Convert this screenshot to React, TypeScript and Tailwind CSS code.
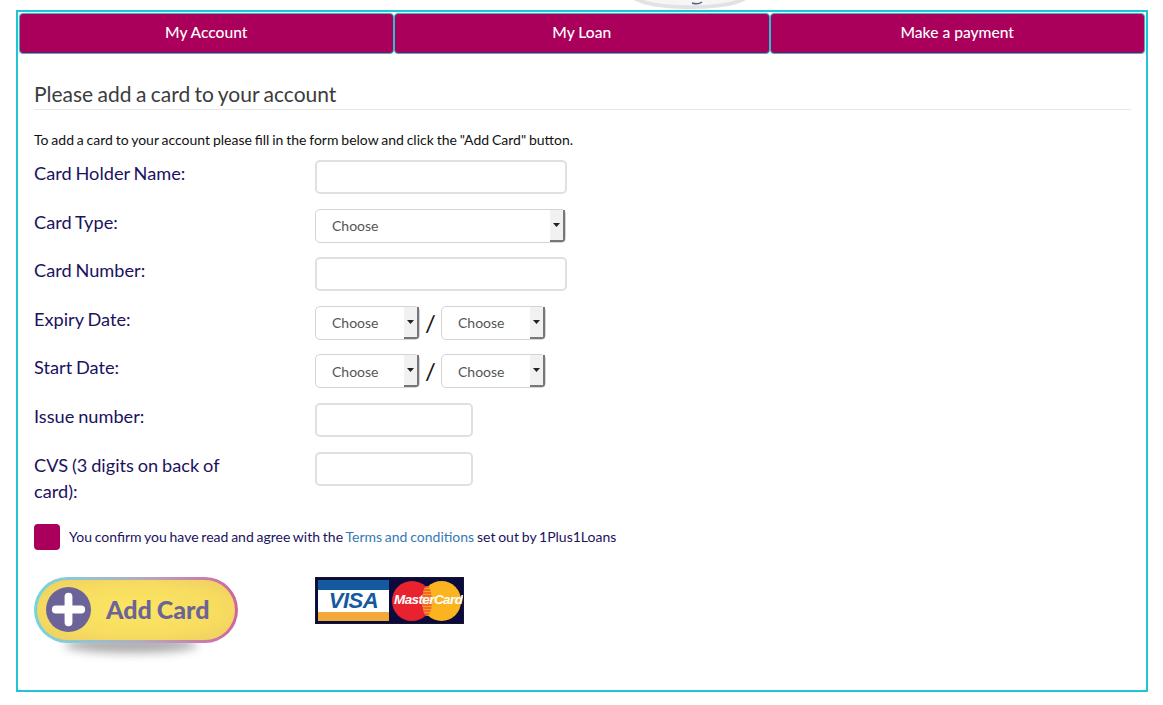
import React from "react";

function Caret() {
  return (
    <div className="absolute right-0 top-0 bottom-0 w-[15px] bg-[#f1f1f1] border-r-2 border-b-2 border-[#777] rounded-br-[3px] flex items-center justify-center">
      <svg width="7" height="4" viewBox="0 0 7 4"><path d="M0 0h7L3.5 4z" fill="#222" /></svg>
    </div>
  );
}

function Select({ w }: { w: string }) {
  return (
    <div className={`relative ${w} h-[34px] border border-[#d4d4d4] rounded-[5px] bg-white pl-4 flex items-center text-[14px] text-[#555]`}>
      Choose
      <Caret />
    </div>
  );
}

function Input({ w }: { w: string }) {
  return <input className={`${w} h-[34px] border-2 border-[#e0e0e0] rounded-[5px] bg-white block`} />;
}

function Row({ label, children }: { label: string; children: React.ReactNode }) {
  return (
    <div className="flex items-start mb-[14.6px]">
      <label className="w-[281px] shrink-0 pr-[80px] pt-[1px] text-[18.2px] leading-[26px] text-[#1b1260] [word-spacing:-0.8px] -mt-[1px]">{label}</label>
      <div className="flex items-center h-[34px]">{children}</div>
    </div>
  );
}

function Slash() {
  return <span className="w-[21px] text-center text-[24px] leading-none text-[#111]">/</span>;
}

function Tab({ children }: { children: React.ReactNode }) {
  return (
    <div className="flex-1 h-[41px] bg-[#aa005c] border border-[#22c3d2] rounded-[4px] flex items-center justify-center text-white text-[15.6px] font-medium">
      {children}
    </div>
  );
}

export default function App() {
  return (
    <div className="relative w-[1163px] h-[705px] bg-white overflow-hidden font-['Lato','Noto_Sans',sans-serif]">
      <svg className="absolute left-[630px] top-0" width="120" height="10" viewBox="0 0 120 10">
        <path d="M4 0C22 12 98 12 116 0Z" fill="#e2e2e4" />
        <path d="M14 0C32 7 88 7 106 0Z" fill="#f6f6f8" />
        <path d="M62 3q6 2 10-1" stroke="#5a6478" strokeWidth="1.5" fill="none" />
      </svg>
      <div className="pt-[10px] pl-4">
        <div className="w-[1132px] h-[682px] border-2 border-[#22c3d2] pl-[0.5px] pt-[0.5px]">
          <div className="flex pr-[1px]">
            <Tab>My Account</Tab>
            <Tab>My Loan</Tab>
            <Tab>Make a payment</Tab>
          </div>
          <div className="pl-[15.5px] pr-[15px]">
            <h2 className="mt-[26.5px] pb-[1px] text-[21px] leading-[28px] text-[#3c3c3c] border-b border-[#e8e8e8] [word-spacing:-1px]">
              Please add a card to your account
            </h2>
            <p className="mt-[20px] mb-[10px] text-[14px] leading-[20px] text-[#111] [word-spacing:-0.75px]">
              To add a card to your account please fill in the form below and click the "Add Card" button.
            </p>
            <Row label="Card Holder Name:"><Input w="w-[252px]" /></Row>
            <Row label="Card Type:"><Select w="w-[251px]" /></Row>
            <Row label="Card Number:"><Input w="w-[252px]" /></Row>
            <Row label="Expiry Date:">
              <Select w="w-[105px]" /><Slash /><Select w="w-[105px]" />
            </Row>
            <Row label="Start Date:">
              <Select w="w-[105px]" /><Slash /><Select w="w-[105px]" />
            </Row>
            <Row label="Issue number:"><Input w="w-[158px]" /></Row>
            <div className="flex items-start mb-[20px]">
              <label className="w-[281px] shrink-0 pr-[80px] text-[18.2px] leading-[26px] text-[#1b1260] [word-spacing:-0.8px]">CVS (3 digits on back of card):</label>
              <div className="flex items-center h-[34px]"><Input w="w-[158px]" /></div>
            </div>
            <div className="flex items-center">
              <div className="w-[26px] h-[26px] bg-[#aa005c] rounded-[4px]" />
              <p className="ml-[9px] text-[14px] text-[#1b1260] [word-spacing:-0.8px]">
                You confirm you have read and agree with the <a className="text-[#337ab7]">Terms and conditions</a> set out by 1Plus1Loans
              </p>
            </div>
            <div className="flex items-start mt-[27px]">
              <div className="w-[281px] shrink-0">
                <div className="relative w-[204px] h-[66px]">
                  <div className="absolute left-[30px] right-[40px] top-[60px] h-[16px] rounded-[50%] bg-[#777] opacity-60 blur-[5px]" />
                  <div className="relative h-full rounded-full p-[3px] bg-gradient-to-r from-[#6fd6e0] via-[#b0aec0] to-[#cf62a0]">
                    <div className="h-full rounded-full bg-[radial-gradient(ellipse_at_center,#fbe662_0%,#f7dc60_60%,#eccd62_100%)] flex items-center pl-[9px]">
                      <svg width="45" height="45" viewBox="0 0 46 46" className="shrink-0">
                        <circle cx="23" cy="23" r="23" fill="#6c6498" />
                        <path d="M23 10v26M10 23h26" stroke="#fff" strokeWidth="8" strokeLinecap="round" />
                      </svg>
                      <span className="ml-[15px] text-[25px] font-black text-[#6c6498] [word-spacing:-1px] whitespace-nowrap">Add Card</span>
                    </div>
                  </div>
                </div>
              </div>
              <div className="w-[149px] h-[47px] bg-[#0a0a3c] border border-[#15152e] flex items-stretch overflow-hidden">
                <div className="w-[71px] my-[2px] ml-[2px] bg-white flex flex-col">
                  <div className="h-[11px] bg-[#155a9e]" />
                  <div className="flex-1 flex items-center justify-center italic font-black text-[22px] leading-none text-[#155a9e] font-['Liberation_Sans',sans-serif] tracking-[-0.5px]">VISA</div>
                  <div className="h-[10px] bg-[#f2a93a]" />
                </div>
                <div className="relative flex-1">
                  <div className="absolute left-[3px] top-[3px] w-[40px] h-[40px] rounded-full bg-[#e9222f]" />
                  <div className="absolute left-[33px] top-[3px] w-[39px] h-[40px] rounded-full bg-[#fbb31f]" />
                  <div className="absolute left-[33px] top-[8px] w-[10px] h-[30px] rounded-[50%] bg-[repeating-linear-gradient(180deg,#f1682a_0px,#f1682a_2px,#f9a028_2px,#f9a028_3px)]" />
                  <div className="absolute left-[5px] top-0 bottom-0 right-0 flex items-center italic font-bold text-[13.5px] text-white font-['Liberation_Sans',sans-serif] tracking-[-0.6px] whitespace-nowrap">MasterCard</div>
                </div>
              </div>
            </div>
          </div>
        </div>
      </div>
    </div>
  );
}
